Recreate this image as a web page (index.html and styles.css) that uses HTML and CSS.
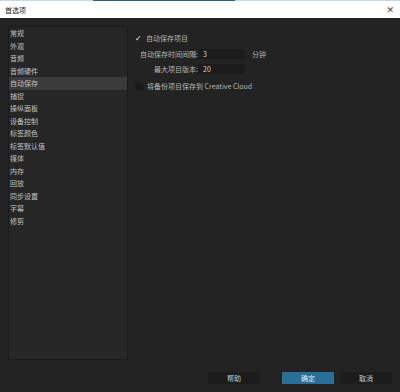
FILE: index.html
```html
<!DOCTYPE html>
<html lang="zh">
<head>
  <meta charset="UTF-8" />
  <title>首选项</title>
  <link rel="stylesheet" href="styles.css">
</head>
<body>
  <div class="topline"><span class="seg-a"></span><span class="seg-b"></span><span class="seg-c"></span></div>
  <div class="titlebar">
    <span class="title">首选项</span>
    <span class="close">✕</span>
  </div>
  <div class="dialog">
    <div class="main">
      <div class="list">
        <div class="item">常规</div>
        <div class="item">外观</div>
        <div class="item">音频</div>
        <div class="item">音频硬件</div>
        <div class="item selected">自动保存</div>
        <div class="item">捕捉</div>
        <div class="item">操纵面板</div>
        <div class="item">设备控制</div>
        <div class="item">标签颜色</div>
        <div class="item">标签默认值</div>
        <div class="item">媒体</div>
        <div class="item">内存</div>
        <div class="item">回放</div>
        <div class="item">同步设置</div>
        <div class="item">字幕</div>
        <div class="item">修剪</div>
      </div>
      <div class="settings">
        <div class="row check-row">
          <span class="tick">✓</span>
          <span>自动保存项目</span>
        </div>
        <div class="row field-row">
          <span class="label">自动保存时间间隔:</span>
          <span class="input">3</span>
          <span class="unit">分钟</span>
        </div>
        <div class="row field-row">
          <span class="label">最大项目版本:</span>
          <span class="input">20</span>
        </div>
        <div class="row check-row">
          <span class="box"></span>
          <span>将备份项目保存到 Creative Cloud</span>
        </div>
      </div>
    </div>
    <div class="footer">
      <button class="btn">帮助</button>
      <button class="btn primary">确定</button>
      <button class="btn">取消</button>
    </div>
  </div>
</body>
</html>
```

FILE: styles.css
```css
html, body {
  margin: 0;
  height: 100%;
}
body {
  background: #232323;
  font-family: "Noto Sans CJK SC", "Noto Sans", sans-serif;
  font-size: 7px;
  color: #b4b4b4;
  display: flex;
  flex-direction: column;
}
.topline {
  display: flex;
  height: 1px;
}
.seg-a { width: 93px; background: #c9d6e3; }
.seg-b { width: 142px; background: #3d5a73; }
.seg-c { flex: 1; background: #c9d6e3; }
.titlebar {
  height: 17px;
  background: #fff;
  display: flex;
  align-items: center;
  justify-content: space-between;
  padding: 0 6px 0 5px;
  color: #222;
}
.close {
  font-size: 9px;
  color: #444;
  font-family: "DejaVu Sans", sans-serif;
}
.dialog {
  flex: 1;
  display: flex;
  flex-direction: column;
  padding: 8px 8px 8px 8px;
}
.main {
  display: flex;
  height: 334px;
}
.list {
  width: 118px;
  border: 1px solid #1b1b1b;
  background: #262626;
  box-shadow: inset 0 -8px 0 -1px #282828;
}
.item {
  height: 12.5px;
  line-height: 12.5px;
  padding-left: 1px;
  color: #c0c0c0;
}
.item.selected {
  background: #3b3b3b;
}
.settings {
  padding: 6px 0 0 7px;
}
.row {
  display: flex;
  align-items: center;
}
.check-row {
  height: 12px;
  gap: 3px;
}
.tick {
  width: 8px;
  color: #e8e8e8;
  font-family: "DejaVu Sans", sans-serif;
  font-size: 8px;
  font-weight: bold;
}
.box {
  width: 7px;
  height: 7px;
  background: #191919;
  border: 1px solid #1f1f1f;
}
.field-row {
  height: 10px;
  margin: 5px 0 3px;
}
.field-row + .field-row {
  margin-top: 5px;
  margin-bottom: 6px;
}
.label {
  width: 63px;
  text-align: right;
}
.input {
  width: 42px;
  height: 10px;
  line-height: 10px;
  background: #1c1c1c;
  padding-left: 5px;
  color: #d0d0d0;
}
.unit {
  margin-left: 7px;
}
.footer {
  display: flex;
  justify-content: flex-end;
  margin-top: 12px;
}
.btn {
  width: 52px;
  height: 12px;
  border: 0;
  padding: 0;
  background: #1c1c1c;
  color: #c8c8c8;
  font-family: inherit;
  font-size: 7px;
  margin-left: 6px;
}
.btn.primary {
  background: #2a6f98;
  color: #e6eef4;
  margin-left: 22px;
}
```
